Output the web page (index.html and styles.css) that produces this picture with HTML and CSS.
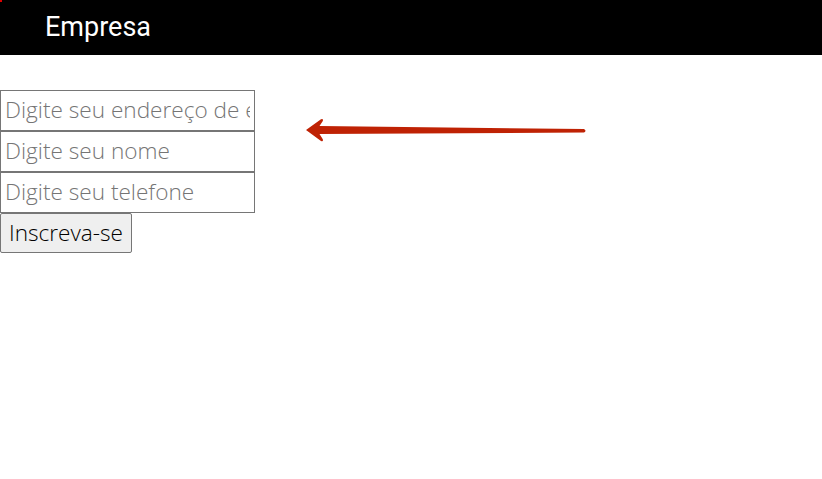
FILE: index.html
```html
<!DOCTYPE html>
<html lang="pt">
<head>
<meta charset="utf-8">
<title>Empresa</title>
<link rel="stylesheet" href="styles.css">
</head>
<body>
<header class="topbar">
  <span class="corner"></span>
  <h1 class="brand">Empresa</h1>
</header>
<main class="content">
  <form class="signup">
    <input class="field" type="email" placeholder="Digite seu endereço de e-mail">
    <input class="field" type="text" placeholder="Digite seu nome">
    <input class="field" type="tel" placeholder="Digite seu telefone">
    <button class="submit" type="button">Inscreva-se</button>
  </form>
  <svg class="arrow" width="290" height="30" viewBox="0 0 290 30" xmlns="http://www.w3.org/2000/svg">
    <path d="M3 15 L18 4.2 Q20.5 3.2 19.8 6 L16.5 11 L281 14 Q284 15.8 281 17.6 L16.5 19 L19.8 24.2 Q20.5 27 18 26 Z" fill="#bf2204"/>
  </svg>
</main>
</body>
</html>
```

FILE: styles.css
```css
html, body {
  margin: 0;
  padding: 0;
  background: #fff;
}
body {
  font-family: "Open Sans", "Liberation Sans", sans-serif;
}
.topbar {
  position: relative;
  height: 55px;
  background: #000;
  display: flex;
  align-items: center;
  padding-left: 45px;
}
.corner {
  position: absolute;
  left: 0;
  top: 0;
  width: 2px;
  height: 2px;
  background: #e00000;
}
.brand {
  margin: 0;
  font-family: Roboto, "Liberation Sans", sans-serif;
  font-weight: 400;
  font-size: 27px;
  color: #fff;
  line-height: 1;
}
.content {
  position: relative;
  padding-top: 35px;
}
.signup {
  display: flex;
  flex-direction: column;
  align-items: flex-start;
}
.field {
  box-sizing: border-box;
  width: 255px;
  height: 41px;
  margin: 0;
  padding: 0 4px 3px 4px;
  border: 1px solid #767676;
  border-radius: 0;
  font-family: "Open Sans", sans-serif;
  font-weight: 300;
  font-size: 22.6px;
  color: #000;
  outline: none;
}
.field::placeholder {
  color: #757575;
}
.submit {
  box-sizing: border-box;
  width: 132px;
  height: 40px;
  margin: 0;
  padding: 0 0 2px 0;
  border: 1px solid #767676;
  border-radius: 2px;
  background: #efefef;
  font-family: "Open Sans", sans-serif;
  font-weight: 300;
  font-size: 22.6px;
  color: #000;
}
.arrow {
  position: absolute;
  left: 303px;
  top: 60px;
}
```
